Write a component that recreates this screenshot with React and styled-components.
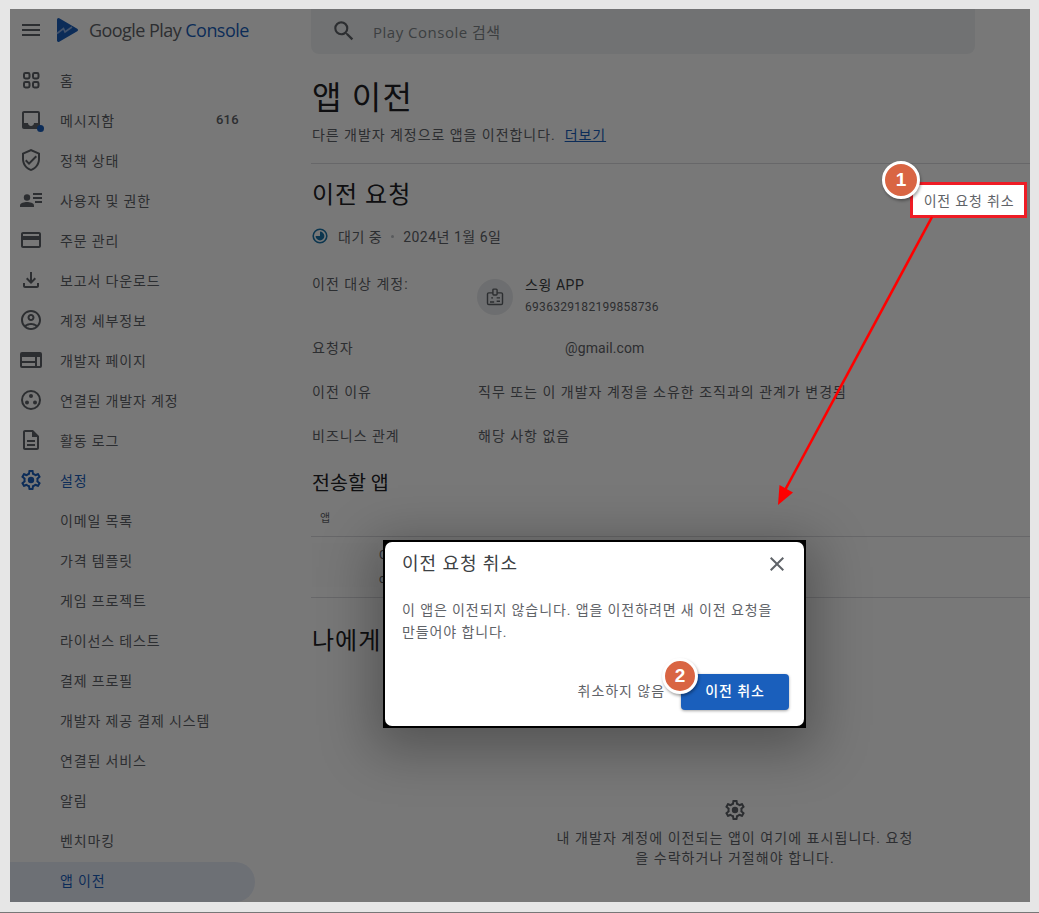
import React from 'react';
import styled, { createGlobalStyle } from 'styled-components';
import {
  MdInbox, MdOutlineVerifiedUser, MdOutlineCreditCard,
  MdOutlineFileDownload, MdOutlineAccountCircle,
  MdOutlineDescription, MdMenu, MdSearch, MdClose,
} from 'react-icons/md';

const GEAR = 'M19.43 12.98c.04-.32.07-.64.07-.98 0-.34-.03-.66-.07-.98l2.11-1.65c.19-.15.24-.42.12-.64l-2-3.46c-.09-.16-.26-.25-.44-.25-.06 0-.12.01-.17.03l-2.49 1c-.52-.4-1.08-.73-1.69-.98l-.38-2.65C14.46 2.18 14.25 2 14 2h-4c-.25 0-.46.18-.49.42l-.38 2.65c-.61.25-1.17.59-1.69.98l-2.49-1c-.06-.02-.12-.03-.18-.03-.17 0-.34.09-.43.25l-2 3.46c-.13.22-.07.49.12.64l2.11 1.65c-.04.32-.07.65-.07.98 0 .33.03.66.07.98l-2.11 1.65c-.19.15-.24.42-.12.64l2 3.46c.09.16.26.25.44.25.06 0 .12-.01.17-.03l2.49-1c.52.4 1.08.73 1.69.98l.38 2.65c.03.24.24.42.49.42h4c.25 0 .46-.18.49-.42l.38-2.65c.61-.25 1.17-.59 1.69-.98l2.49 1c.06.02.12.03.18.03.17 0 .34-.09.43-.25l2-3.46c.12-.22.07-.49-.12-.64l-2.11-1.65zm-1.98-1.71c.04.31.05.52.05.73 0 .21-.02.43-.05.73l-.14 1.13.89.7 1.08.84-.7 1.21-1.27-.51-1.04-.42-.9.68c-.43.32-.84.56-1.25.73l-1.06.43-.16 1.13-.2 1.35h-1.4l-.19-1.35-.16-1.13-1.06-.43c-.43-.18-.83-.41-1.23-.71l-.91-.7-1.06.43-1.27.51-.7-1.21 1.08-.84.89-.7-.14-1.13c-.03-.31-.05-.54-.05-.74s.02-.43.05-.73l.14-1.13-.89-.7-1.08-.84.7-1.21 1.27.51 1.04.42.9-.68c.43-.32.84-.56 1.25-.73l1.06-.43.16-1.13.2-1.35h1.39l.19 1.35.16 1.13 1.06.43c.43.18.83.41 1.23.71l.91.7 1.06-.43 1.27-.51.7 1.21-1.07.85-.89.7.14 1.13z';

const Global = createGlobalStyle`
  html, body { margin: 0; padding: 0; }
  body { font-family: Roboto, "Noto Sans CJK KR", sans-serif; overflow: hidden; }
  * { box-sizing: border-box; }
`;

const Page = styled.div`
  width: 1039px; height: 913px; background: #e6e6e6;
  padding: 9px 9px 10px 10px; border-bottom: 1px solid #777;
  position: relative; overflow: hidden;
`;
const Screen = styled.div`
  width: 100%; height: 100%; background: #fff; display: flex; overflow: hidden;
  position: relative; color: #202124;
`;
const Sidebar = styled.aside`
  width: 301px; flex: none; display: flex; flex-direction: column;
`;
const Brand = styled.div`
  height: 41px; display: flex; align-items: center; padding-left: 9px; color: #5f6368;
`;
const MenuSlot = styled.span`
  display: flex; font-size: 24px; margin-right: 12px;
`;
const LogoText = styled.span`
  font-family: "Open Sans", Roboto, sans-serif; font-size: 18px; letter-spacing: -0.55px;
  margin-left: 10px; color: #5f6368; white-space: nowrap;
`;
const LogoBlue = styled.span` color: #1a5fbc; `;
const Nav = styled.nav`
  display: flex; flex-direction: column; padding-top: 10px;
`;
const NavItem = styled.div`
  height: 40px; width: 245px; display: flex; align-items: center; padding: 0 0 ${p => (p.$sel ? 5 : 1)}px ${p => (p.$sub ? 50 : 9)}px;
  font-size: 14px; letter-spacing: .85px; white-space: nowrap;
  color: ${p => (p.$on ? '#1a5fbc' : '#5f6368')};
  background: ${p => (p.$sel ? '#e8eef9' : 'transparent')};
  border-radius: 0 20px 20px 0;
  flex: none;
  margin-top: ${p => (p.$sel ? 2 : 0)}px;
`;
const IconSlot = styled.span`
  width: 24px; height: 24px; margin-right: 17px; flex: none; position: relative;
  display: flex; font-size: 24px;
`;
const NavCount = styled.span`
  margin-left: auto; margin-right: 16px; font-size: 13px; letter-spacing: .3px; font-weight: 500;
`;
const Dot = styled.span`
  position: absolute; right: -1px; bottom: 0; width: 7px; height: 7px; border-radius: 50%;
  background: #1a5fbc;
`;
const Main = styled.main`
  flex: 1; min-width: 0; display: flex; flex-direction: column;
`;
const SearchBar = styled.div`
  width: 664px; height: 45px; flex: none; background: #f1f3f4; border-radius: 0 0 8px 8px;
  display: flex; align-items: center; padding: 0 0 2px 20px; color: #5f6368; font-size: 26px;
`;
const SearchText = styled.span`
  font-size: 15px; margin: 2px 0 0 16px; color: #80868b; letter-spacing: .5px;
  font-family: "Open Sans", "Noto Sans CJK KR", sans-serif;
`;
const H1 = styled.h1`
  margin: 22px 0 0 1px; font-size: 32px; line-height: 44px; font-weight: 400; letter-spacing: 1.2px;
`;
const Sub = styled.p`
  margin: 5px 0 0 1px; font-size: 14px; line-height: 20px; color: #5f6368; letter-spacing: .95px;
`;
const Link = styled.a`
  color: #1a5fbc; text-decoration: underline; margin-left: 9px;
`;
const Divider = styled.hr`
  margin: ${p => p.$top || 0}px 0 0; border: 0; border-top: 1px solid #dadce0; width: 100%; flex: none;
`;
const H2 = styled.h2`
  margin: ${p => p.$top || 0}px 0 0 1px; font-size: 24px; line-height: 32px; font-weight: 400; letter-spacing: 1px;
  white-space: nowrap;
`;
const Status = styled.div`
  margin: 15px 0 0 1px; display: flex; align-items: center; height: 20px;
  font-size: 14px; color: #5f6368; letter-spacing: .5px;
`;
const StatusIcon = styled.svg` width: 16px; height: 16px; margin-right: 10px; `;
const Sep = styled.span`
  width: 3px; height: 3px; border-radius: 50%; background: #bdc1c6; margin: 0 9px;
`;
const DetailRow = styled.div`
  display: grid; grid-template-columns: 166px 1fr; margin: ${p => p.$top}px 0 0 1px;
  font-size: 14px; line-height: 20px; color: #5f6368; letter-spacing: 1px; white-space: nowrap;
`;
const Email = styled.span` padding-left: 87px; letter-spacing: .1px; `;
const Account = styled.div` display: flex; gap: 12px; margin-left: -1px; `;
const Avatar = styled.div`
  width: 36px; height: 36px; border-radius: 50%; background: #e8eaed; flex: none;
  display: flex; align-items: center; justify-content: center; margin-top: 5px;
`;
const AccountName = styled.div` line-height: 20px; margin-top: 1px; color: #3c4043; letter-spacing: .55px; `;
const AccountId = styled.div` font-size: 12px; line-height: 16px; margin-top: 4px; letter-spacing: .3px; `;
const H3 = styled.h3`
  margin: 24px 0 0 1px; font-size: 19.5px; line-height: 28px; font-weight: 400; letter-spacing: 0;
`;
const TableHead = styled.div`
  margin-top: 12px; padding-left: 9px; height: 26px; font-size: 11px; line-height: 18px; color: #5f6368;
`;
const TableRow = styled.div`
  height: 60px; flex: none; display: flex; font-size: 12px; line-height: 24px; color: #5f6368;
  padding-top: 6px;
`;
const RowThumb = styled.div`
  width: 66px; height: 44px; margin: 0 1px 0 1px; background: #fcfcfc; flex: none;
`;
const Empty = styled.div`
  margin: 141px 0 0 244px; width: 360px; display: flex; flex-direction: column; align-items: center;
  text-align: center; font-size: 14px; line-height: 20px; color: #5f6368; letter-spacing: 1.05px;
  word-break: break-all;
`;
const GearIcon = styled.svg`
  width: ${p => p.$s}px; height: ${p => p.$s}px; fill: currentColor; flex: none;
`;
const EmptyText = styled.p` margin: 6px 0 0; `;
const Scrim = styled.div`
  position: absolute; inset: 0; background: rgba(0,0,0,.53);
`;
const Callout = styled.div`
  position: absolute; left: 900px; top: 173px; width: 117px; height: 36px; background: #fff;
  border: 3px solid #ee1c25; display: flex; align-items: center; justify-content: center;
  font-size: 14px; color: #5f6368; letter-spacing: .8px; padding-left: 1px; white-space: nowrap;
`;
const Badge = styled.div`
  position: absolute; left: ${p => p.$x}px; top: ${p => p.$y}px; width: ${p => p.$d}px; height: ${p => p.$d}px;
  border-radius: 50%; background: #d96543; border: 3px solid #fff; color: #fff;
  display: flex; align-items: center; justify-content: center; font: 700 19px "Liberation Sans", Arial, sans-serif;
  box-shadow: 1px 2px 3px rgba(0,0,0,.35);
`;
const ArrowSvg = styled.svg`
  position: absolute; left: 750px; top: 200px; width: 200px; height: 310px; overflow: visible;
`;
const Dialog = styled.div`
  position: absolute; left: 373px; top: 531px; width: 423px; height: 188px;
  background: #000; padding: 2px; box-shadow: 0 12px 50px 10px rgba(0,0,0,.3);
`;
const DialogBody = styled.div`
  width: 100%; height: 100%; background: #fff; border-radius: 7px; padding: 6px 15px 16px 17px;
  display: flex; flex-direction: column;
`;
const DialogHead = styled.div`
  display: flex; align-items: center; justify-content: space-between; height: 28px;
`;
const DialogTitle = styled.div`
  font-size: 18px; color: #3c4043; letter-spacing: .95px; white-space: nowrap;
`;
const CloseBtn = styled.span` display: flex; font-size: 24px; color: #5f6368; margin: 3px 0 0; `;
const DialogText = styled.p`
  margin: 23px 2px 0 0; font-size: 14px; line-height: 22px; color: #5f6368; letter-spacing: .9px;
`;
const DialogActions = styled.div`
  margin-top: auto; display: flex; align-items: center; justify-content: flex-end;
`;
const TextBtn = styled.span`
  font-size: 14px; color: #5f6368; letter-spacing: .95px; margin-right: 16px; white-space: nowrap;
  padding-bottom: 4px;
`;
const PrimaryBtn = styled.span`
  width: 108px; height: 36px; background: #1a5fbc; color: #fff; border-radius: 4px; padding-bottom: 4px;
  display: flex; align-items: center; justify-content: center; font-size: 14px; font-weight: 500;
  letter-spacing: .9px; box-shadow: 0 1px 3px rgba(0,0,0,.35);
`;

const Gear = ({ s = 24 }) => (
  <GearIcon viewBox="0 0 24 24" $s={s}><path d={GEAR} /><circle cx="12" cy="12" r="3.2" /></GearIcon>
);
const HomeGrid = () => (
  <GearIcon viewBox="0 0 24 24" $s={24}>
    <g fill="none" stroke="currentColor" strokeWidth="2">
      <rect x="5" y="5" width="5.5" height="5.5" rx="1.4" />
      <rect x="14" y="5" width="5.5" height="5.5" rx="1.4" />
      <rect x="5" y="14" width="5.5" height="5.5" rx="1.4" />
      <rect x="14" y="14" width="5.5" height="5.5" rx="1.4" />
    </g>
  </GearIcon>
);
const Linked = () => (
  <GearIcon viewBox="0 0 24 24" $s={24}>
    <circle cx="12" cy="12" r="9" fill="none" stroke="currentColor" strokeWidth="2" />
    <circle cx="12" cy="8" r="2" /><circle cx="8" cy="14.5" r="2" /><circle cx="16" cy="14.5" r="2" />
  </GearIcon>
);
const Users = () => (
  <GearIcon viewBox="0 0 24 24" $s={24}>
    <circle cx="8" cy="9.5" r="3.2" /><path d="M1 19v-1.6c0-2.2 4.4-3.3 7-3.3s7 1.1 7 3.3V19z" />
    <path d="M14 5h9v2h-9zM14 9h9v2h-9zM16 13h7v2h-7z" />
  </GearIcon>
);
const DevPage = () => (
  <GearIcon viewBox="0 0 24 24" $s={24}>
    <path fillRule="evenodd" d="M3 4h18a2 2 0 0 1 2 2v12a2 2 0 0 1-2 2H3a2 2 0 0 1-2-2V6a2 2 0 0 1 2-2zm0 5v4h13V9zm0 6v3h13v-3zM18 9v9h3V9z" />
  </GearIcon>
);
const Logo = () => (
  <svg width="24" height="26" viewBox="0 0 24 26">
    <path d="M3.5 2.5 L21.5 13 L3.5 23.5 Z" fill="#1a5fbc" stroke="#1a5fbc" strokeWidth="3" strokeLinejoin="round" />
    <path d="M2 16.5 L8.5 11.5 L10 15 L17 10" fill="none" stroke="#8fb0e4" strokeWidth="1.6" />
  </svg>
);
const BadgeIcon = () => (
  <svg width="20" height="20" viewBox="0 0 24 24" fill="none" stroke="#5f6368" strokeWidth="1.7">
    <rect x="3" y="7" width="18" height="14" rx="1.5" />
    <rect x="9.5" y="2.5" width="5" height="7" rx="1" fill="#e8eaed" />
    <circle cx="8.5" cy="13" r="1.1" fill="#5f6368" stroke="none" />
    <path d="M6 18h5M14 13h4M14 17h4" />
  </svg>
);

const items = [
  ['홈', <HomeGrid />], ['메시지함', <><MdInbox /><Dot /></>, '616'],
  ['정책 상태', <MdOutlineVerifiedUser />], ['사용자 및 권한', <Users />],
  ['주문 관리', <MdOutlineCreditCard />], ['보고서 다운로드', <MdOutlineFileDownload />],
  ['계정 세부정보', <MdOutlineAccountCircle />], ['개발자 페이지', <DevPage />],
  ['연결된 개발자 계정', <Linked />], ['활동 로그', <MdOutlineDescription />],
];
const subs = ['이메일 목록', '가격 템플릿', '게임 프로젝트', '라이선스 테스트', '결제 프로필', '개발자 제공 결제 시스템', '연결된 서비스', '알림', '벤치마킹'];

export default function App() {
  return (
    <Page>
      <Global />
      <Screen>
        <Sidebar>
          <Brand>
            <MenuSlot><MdMenu /></MenuSlot>
            <Logo />
            <LogoText>Google Play <LogoBlue>Console</LogoBlue></LogoText>
          </Brand>
          <Nav>
            {items.map(([t, ic, n]) => (
              <NavItem key={t}><IconSlot>{ic}</IconSlot>{t}{n && <NavCount>{n}</NavCount>}</NavItem>
            ))}
            <NavItem $on><IconSlot><Gear /></IconSlot>설정</NavItem>
            {subs.map(t => <NavItem $sub key={t}>{t}</NavItem>)}
            <NavItem $sub $on $sel>앱 이전</NavItem>
          </Nav>
        </Sidebar>
        <Main>
          <SearchBar><MdSearch /><SearchText>Play Console 검색</SearchText></SearchBar>
          <H1>앱 이전</H1>
          <Sub>다른 개발자 계정으로 앱을 이전합니다.<Link>더보기</Link></Sub>
          <Divider $top={18} />
          <H2 $top={15}>이전 요청</H2>
          <Status>
            <StatusIcon viewBox="0 0 16 16">
              <circle cx="8" cy="8" r="6.8" fill="none" stroke="#1a73a8" strokeWidth="1.6" />
              <path d="M8 3.6a4.4 4.4 0 1 1-4.4 4.4H8z" fill="#1a73a8" />
            </StatusIcon>
            대기 중<Sep />2024년 1월 6일
          </Status>
          <DetailRow $top={28}>
            <span>이전 대상 계정:</span>
            <Account>
              <Avatar><BadgeIcon /></Avatar>
              <div>
                <AccountName>스윙 APP</AccountName>
                <AccountId>6936329182199858736</AccountId>
              </div>
            </Account>
          </DetailRow>
          <DetailRow $top={23}><span>요청자</span><Email>@gmail.com</Email></DetailRow>
          <DetailRow $top={24}><span>이전 이유</span><span>직무 또는 이 개발자 계정을 소유한 조직과의 관계가 변경됨</span></DetailRow>
          <DetailRow $top={24}><span>비즈니스 관계</span><span>해당 사항 없음</span></DetailRow>
          <H3>전송할 앱</H3>
          <TableHead>앱</TableHead>
          <Divider />
          <TableRow><RowThumb /><span>C<br />c</span></TableRow>
          <Divider />
          <H2 $top={27}>나에게</H2>
          <Empty>
            <Gear s={24} />
            <EmptyText>내 개발자 계정에 이전되는 앱이 여기에 표시됩니다. 요청을 수락하거나 거절해야 합니다.</EmptyText>
          </Empty>
        </Main>
        <Scrim />
        <Callout>이전 요청 취소</Callout>
        <ArrowSvg viewBox="0 0 200 310">
          <path d="M172 8 L24 283" stroke="#f00" strokeWidth="2.6" fill="none" />
          <path d="M18 296 L19.5 276 L33 283.5 Z" fill="#f00" />
        </ArrowSvg>
        <Dialog>
          <DialogBody>
            <DialogHead>
              <DialogTitle>이전 요청 취소</DialogTitle>
              <CloseBtn><MdClose /></CloseBtn>
            </DialogHead>
            <DialogText>이 앱은 이전되지 않습니다. 앱을 이전하려면 새 이전 요청을 만들어야 합니다.</DialogText>
            <DialogActions>
              <TextBtn>취소하지 않음</TextBtn>
              <PrimaryBtn>이전 취소</PrimaryBtn>
            </DialogActions>
          </DialogBody>
        </Dialog>
        <Badge $x={872} $y={152} $d={38}>1</Badge>
        <Badge $x={652} $y={649} $d={36}>2</Badge>
      </Screen>
    </Page>
  );
}
